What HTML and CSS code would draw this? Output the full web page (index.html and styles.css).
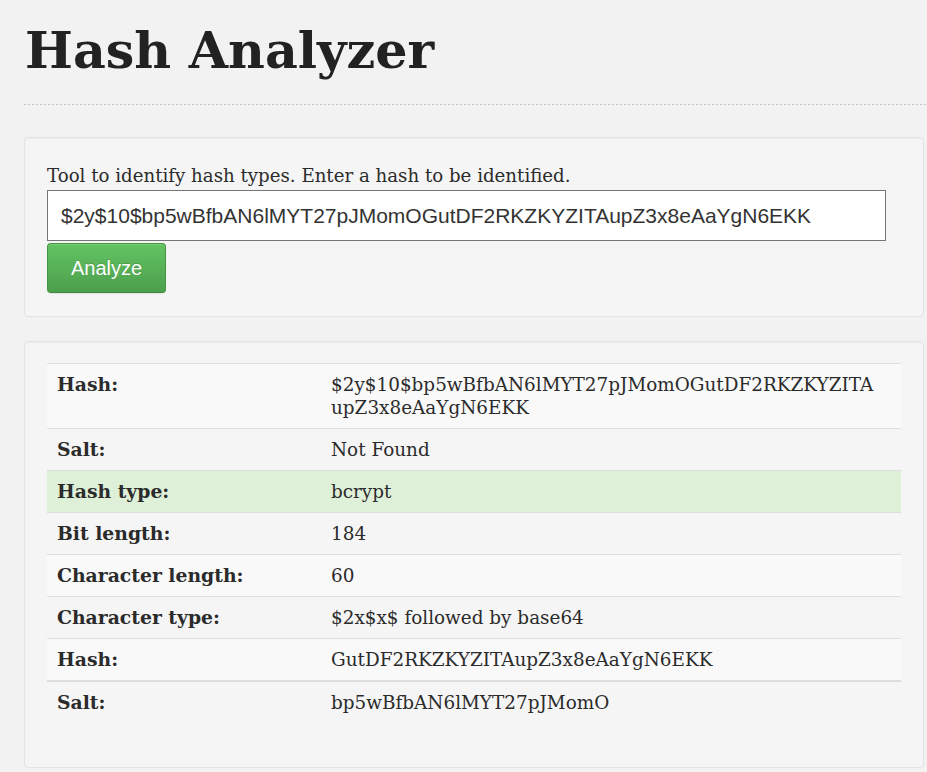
FILE: index.html
```html
<!DOCTYPE html>
<html lang="en">
<head>
<meta charset="utf-8">
<title>Hash Analyzer</title>
<link rel="stylesheet" href="styles.css">
</head>
<body>
<div class="page">
  <header class="page-header">
    <h1 class="title">Hash Analyzer</h1>
    <div class="rule"></div>
  </header>

  <section class="well form-well">
    <label class="desc" for="hash">Tool to identify hash types. Enter a hash to be identified.</label>
    <input class="hash-input" id="hash" type="text" value="$2y$10$bp5wBfbAN6lMYT27pJMomOGutDF2RKZKYZITAupZ3x8eAaYgN6EKK">
    <div class="actions"><button class="btn-success" type="button">Analyze</button></div>
  </section>

  <section class="well result-well">
    <table class="result">
      <tbody>
        <tr class="stripe"><th>Hash:</th><td>$2y$10$bp5wBfbAN6lMYT27pJMomOGutDF2RKZKYZITA<wbr>upZ3x8eAaYgN6EKK</td></tr>
        <tr><th>Salt:</th><td>Not Found</td></tr>
        <tr class="success"><th>Hash type:</th><td>bcrypt</td></tr>
        <tr><th>Bit length:</th><td>184</td></tr>
        <tr class="stripe"><th>Character length:</th><td>60</td></tr>
        <tr><th>Character type:</th><td>$2x$x$ followed by base64</td></tr>
        <tr class="stripe"><th>Hash:</th><td>GutDF2RKZKYZITAupZ3x8eAaYgN6EKK</td></tr>
      </tbody>
      <tbody class="extra">
        <tr><th>Salt:</th><td>bp5wBfbAN6lMYT27pJMomO</td></tr>
      </tbody>
    </table>
  </section>
</div>
</body>
</html>
```

FILE: styles.css
```css
html, body {
  margin: 0;
  padding: 0;
  background: #f2f2f2;
}
body {
  font-family: "DejaVu Serif", "Liberation Serif", serif;
  font-size: 18.2px;
  line-height: 23px;
  color: #2b2b2b;
}
.page {
  padding: 0 3px 0 24px;
}
.page-header {
  padding-top: 24px;
}
.title {
  margin: 0 0 0 1px;
  font-family: "DejaVu Serif", serif;
  font-weight: bold;
  font-size: 50.7px;
  line-height: 52px;
  color: #222;
}
.rule {
  margin-top: 28px;
  margin-right: -3px;
  height: 1px;
  background: repeating-linear-gradient(to right, #c4c4c4 0, #c4c4c4 2px, transparent 2px, transparent 4px);
}
.well {
  background: #f5f5f5;
  border: 1px solid #e3e3e3;
  border-radius: 4px;
  box-shadow: inset 0 1px 1px rgba(0, 0, 0, 0.04);
}
.form-well {
  margin-top: 32px;
  padding: 26px 22px 23px 22px;
}
.desc {
  display: block;
  margin-bottom: 3px;
}
.hash-input {
  display: block;
  box-sizing: border-box;
  width: 839px;
  height: 51px;
  margin: 0;
  padding: 0 13px;
  border: 1px solid #767676;
  border-radius: 0;
  background: #fff;
  font-family: "Liberation Sans", Arial, sans-serif;
  font-size: 21px;
  color: #333;
  outline: none;
}
.actions {
  margin-top: 2px;
  display: flex;
}
.btn-success {
  box-sizing: border-box;
  height: 50px;
  padding: 0 23px;
  border: 1px solid #43953f;
  border-bottom-color: #3a8a3a;
  border-radius: 4px;
  background: linear-gradient(to bottom, #63c363 0%, #4c9f4c 100%);
  box-shadow: inset 0 1px 0 rgba(255, 255, 255, 0.15), 0 1px 1px rgba(0, 0, 0, 0.08);
  color: #fff;
  font-family: "Liberation Sans", Arial, sans-serif;
  font-size: 20px;
  line-height: 24px;
  text-shadow: 0 -1px 0 rgba(0, 0, 0, 0.15);
  cursor: pointer;
}
.result-well {
  margin-top: 24px;
  padding: 21px 22px 44px 22px;
}
.result {
  width: 100%;
  border-collapse: collapse;
  border-spacing: 0;
}
.result th,
.result td {
  padding: 9px 10px;
  border-top: 1px solid #dddddd;
  text-align: left;
  vertical-align: top;
}
.result th {
  width: 254px;
  font-weight: bold;
  font-size: 18.8px;
}
.result td {
  font-size: 18.4px;
}
.result tr.stripe {
  background: #f9f9f9;
}
.result tr.success {
  background: #dff0d8;
}
.result .extra th,
.result .extra td {
  border-top: 2px solid #dddddd;
}
```
